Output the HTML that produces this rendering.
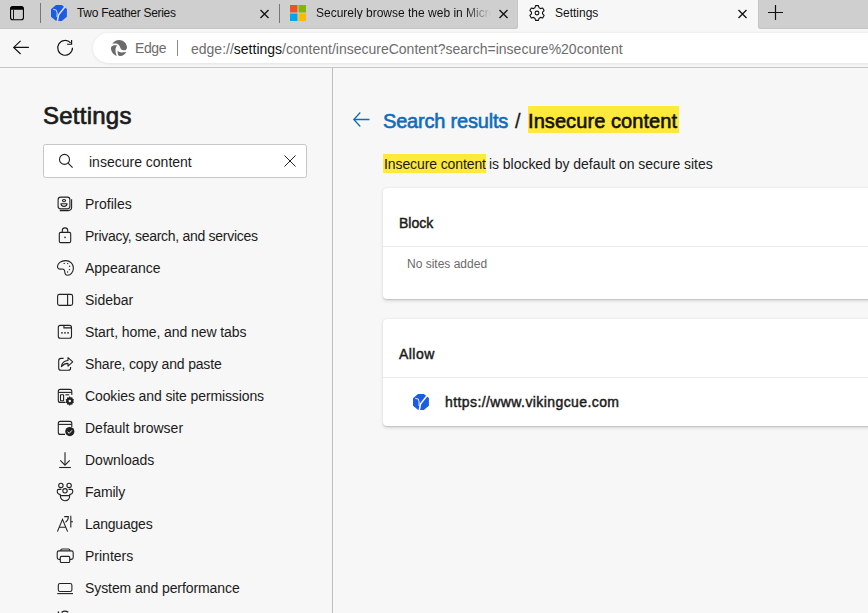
<!DOCTYPE html>
<html><head><meta charset="utf-8">
<style>
*{box-sizing:border-box;margin:0;padding:0}
html,body{width:868px;height:613px;overflow:hidden;background:#f7f7f7;font-family:"Liberation Sans",sans-serif;color:#1b1b1b}
.a{position:absolute;white-space:nowrap;line-height:1}
svg{position:absolute;overflow:visible}
#stripL{position:absolute;left:0;top:0;width:518px;height:29px;background:#cfcfcf;border-bottom-right-radius:3px;box-shadow:inset -1px -1px 0 #c5c5c5}
#stripR{position:absolute;left:758px;top:0;width:110px;height:29px;background:#cfcfcf;border-bottom-left-radius:3px;box-shadow:inset 1px -1px 0 #c5c5c5}
#toolbar{position:absolute;left:0;top:29px;width:868px;height:39px;background:#f7f7f7;border-bottom:1px solid #c6c6c6}
#pill{position:absolute;left:93px;top:33px;width:800px;height:30px;border-radius:15px;background:#fff;box-shadow:0 0.5px 3px rgba(0,0,0,.11)}
#side{position:absolute;left:332px;top:68px;width:1px;height:545px;background:#bdbdbd}
.card{position:absolute;left:383px;width:500px;background:#fff;border-radius:4px;box-shadow:0 1.6px 3.6px rgba(0,0,0,.13),0 0.3px 0.9px rgba(0,0,0,.11)}
.hl{background:#ffe93a}
</style></head><body>
<div id="stripL"></div><div id="stripR"></div>
<!-- tab actions icon -->
<svg style="left:10px;top:6px" width="14" height="14" viewBox="0 0 14 14"><rect x="0.55" y="0.55" width="12.9" height="13.2" rx="2.3" fill="none" stroke="#000" stroke-width="1.1"/><path d="M0.6 3.7 V2.8 A2.2 2.2 0 0 1 2.8 0.6 H11.2 A2.2 2.2 0 0 1 13.4 2.8 V3.7Z" fill="#000"/><line x1="3.5" y1="3.7" x2="3.5" y2="13.5" stroke="#000" stroke-width="0.9"/></svg>
<div class="a" style="left:40px;top:3px;width:1px;height:20px;background:#777"></div>

<!-- tab 1 -->
<svg style="left:51px;top:5px" width="16" height="16" viewBox="0 0 16 16"><path d="M5 0 H10.8 L15.9 4 V11.7 L10.8 16 H5.2 L0 11.7 V4.3Z" fill="#1b5ce6"/><path d="M2.2 4.3 L5.3 5.1 L6.1 7.8 L6 12" stroke="#e6e2da" stroke-width="0.9" fill="none"/><path d="M13.8 2 L7.6 9.8 L6.2 16.5" stroke="#e6e2da" stroke-width="1.5" fill="none"/></svg>
<div class="a" style="left:77px;top:7px;font-size:12px;color:#111;letter-spacing:-0.3px">Two Feather Series</div>
<svg style="left:260px;top:10px" width="9" height="8" viewBox="0 0 9 8"><path d="M0.5 0 L8.5 8 M8.5 0 L0.5 8" stroke="#111" stroke-width="1.3"/></svg>
<div class="a" style="left:279px;top:4px;width:1px;height:19px;background:#777"></div>

<!-- tab 2 -->
<svg style="left:290px;top:5px" width="16" height="16" viewBox="0 0 16 16"><rect x="0" y="0" width="7.5" height="7.5" fill="#f25022"/><rect x="8.5" y="0" width="7.5" height="7.5" fill="#7fba00"/><rect x="0" y="8.5" width="7.5" height="7.5" fill="#00a4ef"/><rect x="8.5" y="8.5" width="7.5" height="7.5" fill="#ffb900"/></svg>
<div class="a" style="left:316px;top:7px;width:175px;overflow:hidden;font-size:12px;color:#111;letter-spacing:0px;-webkit-mask-image:linear-gradient(90deg,#000 85%,transparent)">Securely browse the web in Microsoft Edge</div>
<svg style="left:499px;top:10px" width="9" height="8" viewBox="0 0 9 8"><path d="M0.5 0 L8.5 8 M8.5 0 L0.5 8" stroke="#111" stroke-width="1.3"/></svg>

<!-- tab 3 settings -->
<svg style="left:529px;top:4.8px" width="16" height="16" viewBox="0 0 16 16"><path d="M5.90 2.81 L6.57 0.64 L9.43 0.64 L10.10 2.81 L11.45 3.59 L13.66 3.08 L15.09 5.56 L13.55 7.22 L13.55 8.78 L15.09 10.44 L13.66 12.92 L11.45 12.41 L10.10 13.19 L9.43 15.36 L6.57 15.36 L5.90 13.19 L4.55 12.41 L2.34 12.92 L0.91 10.44 L2.45 8.78 L2.45 7.22 L0.91 5.56 L2.34 3.08 L4.55 3.59Z" fill="none" stroke="#111" stroke-width="1.1" stroke-linejoin="round"/><circle cx="8" cy="8" r="1.9" fill="none" stroke="#111" stroke-width="1.1"/></svg>
<div class="a" style="left:555px;top:7px;font-size:12px;color:#111">Settings</div>
<svg style="left:738px;top:10px" width="9" height="8" viewBox="0 0 9 8"><path d="M0.5 0 L8.5 8 M8.5 0 L0.5 8" stroke="#111" stroke-width="1.3"/></svg>
<svg style="left:768px;top:5px" width="15" height="15" viewBox="0 0 15 15"><path d="M7.5 0 V15 M0 7.5 H15" stroke="#111" stroke-width="1.2"/></svg>

<!-- toolbar -->
<div id="toolbar"></div>
<svg style="left:0;top:0" width="40" height="60" viewBox="0 0 40 60"><path d="M20.6 40.8 L13.7 47.4 L20.6 54 M13.7 47.4 H28.9" stroke="#111" stroke-width="1.15" fill="none"/></svg>
<svg style="left:52px;top:36px" width="26" height="24" viewBox="0 0 26 24"><path d="M20.5 11.85 A7.4 7.4 0 1 1 18.6 6.9" stroke="#111" stroke-width="1.15" fill="none"/><path d="M15.1 8.2 H19.6 V3.9" stroke="#111" stroke-width="1.15" fill="none"/></svg>
<div id="pill"></div>
<svg style="left:111px;top:40px" width="16" height="16" viewBox="0 0 16 16" fill="#6b6b6b"><path d="M1.2 3.8 C3 1.4 5.5 0 8 0 C12.4 0 16 3.4 16 7.6 C16 8.6 15.6 9.4 14.8 9.9 C13.6 10.4 11.4 10.4 10.2 9.2 C9.4 8.3 9 6.8 8.4 5.8 C7.6 4.2 6 3.6 4.4 3.6 C3.2 3.6 2 3.7 1.2 3.8Z"/><path d="M0.2 7 C1 5.8 2.6 5.2 4.2 5.2 C5 5.2 5.8 5.3 6.3 5.6 C5 6.6 4.5 8.2 4.5 10 C4.5 12.4 5 14.3 5.8 15.8 C2.6 14.8 0 11.8 0 8.2Z"/><path d="M6.6 10.4 C7.4 11.6 8.8 12.4 10.8 12.4 C12.6 12.4 14.2 12.1 15.3 11.8 C14.2 14.2 12 16 9.4 16 C8.2 16 7.4 15.4 7 14.4 C6.6 13.2 6.5 11.6 6.6 10.4Z"/></svg>
<div class="a" style="left:135px;top:41px;font-size:14px;color:#6d6d6d;letter-spacing:-0.4px">Edge</div>
<div class="a" style="left:177px;top:40px;width:1px;height:16px;background:#8a8a8a"></div>
<div class="a" style="left:191px;top:42px;font-size:14px;color:#6d6d6d">edge://<span style="color:#111">settings</span>/content/insecureContent?search=insecure%20content</div>

<!-- sidebar -->
<div id="side"></div>
<div class="a" style="left:43px;top:104px;font-size:24px;-webkit-text-stroke:0.7px #1b1b1b;letter-spacing:0.25px;color:#1b1b1b">Settings</div>
<div class="a" style="left:43px;top:144px;width:264px;height:34px;background:#fff;border:1px solid #c6c6c6;border-radius:2.5px"></div>
<svg style="left:59px;top:154px" width="15" height="15" viewBox="0 0 15 15"><circle cx="5.5" cy="5.4" r="5" stroke="#222" stroke-width="1.1" fill="none"/><path d="M9.1 9.1 L13.6 13.6" stroke="#222" stroke-width="1.2"/></svg>
<div class="a" style="left:89px;top:155px;font-size:14px;color:#1b1b1b">insecure content</div>
<svg style="left:284px;top:155px" width="12" height="12" viewBox="0 0 12 12"><path d="M0.5 0.5 L11.5 11.5 M11.5 0.5 L0.5 11.5" stroke="#222" stroke-width="1"/></svg>

<svg style="left:0;top:0" width="868" height="613" viewBox="0 0 868 613" fill="none" stroke="#222" stroke-width="1.1">
<!-- profiles -->
<rect x="58.1" y="197.1" width="11.8" height="11.8" rx="2.6"/>
<path d="M59.8 210.6 H68.5 A3 3 0 0 0 71.6 207.5 V199.2"/>
<ellipse cx="64" cy="200.6" rx="1.6" ry="1.1"/>
<path d="M61 203.8 H67 C67 205.6 65.6 206.4 64 206.4 C62.4 206.4 61 205.6 61 203.8Z"/>
<!-- lock -->
<rect x="59.3" y="232.4" width="11.4" height="10.2" rx="1.4"/>
<path d="M62.3 232.4 V230.6 A2.7 2.7 0 0 1 67.7 230.6 V232.4"/>
<circle cx="65" cy="237.4" r="0.8" fill="#222" stroke="none"/>
<!-- palette -->
<path d="M65.5 260.6 C70.5 260.6 73.4 264.2 73.4 268 C73.4 272.6 70.2 275.2 67.8 275.2 C65.6 275.2 64.8 273.6 64.8 271.8 C64.8 269.2 62.6 268.8 60.8 269.1 C58.8 269.4 57.5 268.3 57.5 266.4 C57.5 263.4 61 260.6 65.5 260.6Z"/>
<circle cx="64.2" cy="263.4" r="0.7" fill="#222" stroke="none"/>
<circle cx="67.6" cy="263.6" r="0.7" fill="#222" stroke="none"/>
<circle cx="69.6" cy="266.2" r="0.7" fill="#222" stroke="none"/>
<circle cx="69.4" cy="269.6" r="0.7" fill="#222" stroke="none"/>
<circle cx="67.6" cy="272" r="0.7" fill="#222" stroke="none"/>
<!-- sidebar -->
<rect x="57.6" y="294.4" width="15" height="11" rx="1.8"/>
<path d="M67.6 294.4 V305.4"/>
<!-- start home -->
<rect x="58.3" y="325.4" width="13.2" height="12.9" rx="2"/>
<path d="M63.9 325.4 V327.9 H71.5"/>
<rect x="61.2" y="332.1" width="1.5" height="1.5" fill="#222" stroke="none"/>
<rect x="64.25" y="332.1" width="1.5" height="1.5" fill="#222" stroke="none"/>
<rect x="67.3" y="332.1" width="1.5" height="1.5" fill="#222" stroke="none"/>
<!-- share -->
<path d="M63.6 358.4 H61 A2.3 2.3 0 0 0 58.7 360.7 V368 A2.3 2.3 0 0 0 61 370.3 H68.3 A2.3 2.3 0 0 0 70.6 368 V367"/>
<path d="M61.4 366.6 C62 362.6 64.6 360.6 68 360.5 V357.6 L72.7 361.8 L68 366.1 V363.4 C65.4 363.4 63.2 364.6 61.4 366.6Z" stroke-linejoin="round"/>
<!-- cookies -->
<path d="M65.5 402.4 H60.3 A2 2 0 0 1 58.3 400.4 V391.4 A2 2 0 0 1 60.3 389.4 H69.8 A2 2 0 0 1 71.8 391.4 V395"/>
<path d="M58.3 392.4 H71.8"/>
<rect x="60.5" y="394.7" width="3.1" height="6" rx="0.4"/>
<path d="M65.4 394.8 H69.2"/>
<path d="M69.8 396.1 L70.7 397.4 L72.3 397.2 L72.6 398.8 L74 399.6 L73.3 401 L74 402.4 L72.6 403.2 L72.3 404.8 L70.7 404.6 L69.8 405.9 L68.9 404.6 L67.3 404.8 L67 403.2 L65.6 402.4 L66.3 401 L65.6 399.6 L67 398.8 L67.3 397.2 L68.9 397.4Z" fill="#222" stroke="none"/>
<circle cx="69.8" cy="401" r="1.2" fill="#f7f7f7" stroke="none"/>
<!-- default browser -->
<path d="M65 434.4 H60.3 A2 2 0 0 1 58.3 432.4 V423.4 A2 2 0 0 1 60.3 421.4 H69.8 A2 2 0 0 1 71.8 423.4 V427"/>
<path d="M58.3 424.4 H71.8"/>
<circle cx="69.8" cy="431.6" r="4.6" fill="#222" stroke="none"/>
<path d="M67.6 431.8 L69.2 433.3 L72 430.3" stroke="#f7f7f7" stroke-width="1"/>
<!-- downloads -->
<path d="M65 452.2 V465"/>
<path d="M60.3 460.4 L65 465.1 L69.7 460.4"/>
<path d="M59.2 467.5 H70.9"/>
<!-- family -->
<circle cx="60.9" cy="485.4" r="2.2"/>
<circle cx="69.1" cy="485.4" r="2.2"/>
<circle cx="65" cy="490.8" r="2.2"/>
<path d="M61.4 489.4 H58.8 A1.6 1.6 0 0 0 57.2 491 C57.2 492.8 58.8 494.4 60.8 494.6"/>
<path d="M68.6 489.4 H71.2 A1.6 1.6 0 0 1 72.8 491 C72.8 492.8 71.2 494.4 69.2 494.6"/>
<path d="M60.3 495.6 H69.7 C69.7 499 67.6 500.8 65 500.8 C62.4 500.8 60.3 499 60.3 495.6Z"/>
<!-- languages -->
<path d="M57.4 531.6 L62.5 519.4 L67.6 531.6 M59.2 527.2 H65.8"/>
<path d="M64.2 516.6 H68.3 C68.3 519.2 67.4 521.2 65.4 522.2"/>
<path d="M70.8 515.8 V527.6 M70.8 521.8 H73"/>
<!-- printer -->
<path d="M60.8 550.8 V550.3 A1.3 1.3 0 0 1 62.1 549 H68.5 A1.3 1.3 0 0 1 69.8 550.3 V550.8"/>
<path d="M60.2 559.4 H59 A1.8 1.8 0 0 1 57.2 557.6 V552.7 A1.8 1.8 0 0 1 59 550.9 H71.4 A1.8 1.8 0 0 1 73.2 552.7 V557.6 A1.8 1.8 0 0 1 71.4 559.4 H69.8"/>
<rect x="60.3" y="556.4" width="9.4" height="6.1" rx="1"/>
<!-- laptop -->
<rect x="58.3" y="583.5" width="13.6" height="8" rx="1.8"/>
<path d="M57.2 593.6 H73"/>
<!-- reset (partial) -->
<path d="M58.4 611.5 V614 M61.6 612.3 C63.5 611 66.5 611 68.3 612.3" stroke-width="1.4"/>
</svg>
<div id="items" style="position:absolute;left:0;top:0">
<div class="a" style="left:85px;top:197px;font-size:14px">Profiles</div>
<div class="a" style="left:85px;top:229px;font-size:14px;letter-spacing:-0.29px">Privacy, search, and services</div>
<div class="a" style="left:85px;top:261px;font-size:14px">Appearance</div>
<div class="a" style="left:85px;top:293px;font-size:14px">Sidebar</div>
<div class="a" style="left:85px;top:325px;font-size:14px;letter-spacing:-0.08px">Start, home, and new tabs</div>
<div class="a" style="left:85px;top:357px;font-size:14px;letter-spacing:-0.17px">Share, copy and paste</div>
<div class="a" style="left:85px;top:389px;font-size:14px;letter-spacing:-0.11px">Cookies and site permissions</div>
<div class="a" style="left:85px;top:421px;font-size:14px">Default browser</div>
<div class="a" style="left:85px;top:453px;font-size:14px">Downloads</div>
<div class="a" style="left:85px;top:485px;font-size:14px;letter-spacing:-0.2px">Family</div>
<div class="a" style="left:85px;top:517px;font-size:14px;letter-spacing:-0.2px">Languages</div>
<div class="a" style="left:85px;top:549px;font-size:14px">Printers</div>
<div class="a" style="left:85px;top:581px;font-size:14px;letter-spacing:-0.08px">System and performance</div>
</div>

<!-- content -->
<svg style="left:353px;top:112px" width="17" height="15" viewBox="0 0 17 15"><path d="M7.3 0.5 L0.8 7.5 L7.3 14.5 M0.8 7.5 H16.5" stroke="#0f6cbd" stroke-width="1.3" fill="none"/></svg>
<div class="a" style="left:383px;top:111px;font-size:20px;-webkit-text-stroke:0.6px #0f6cbd;letter-spacing:-0.2px;color:#0f6cbd">Search results</div>
<div class="a" style="left:515px;top:111px;font-size:20px;-webkit-text-stroke:0.3px #1b1b1b;color:#1b1b1b">/</div>
<div class="a hl" style="left:528px;top:106px;width:151px;height:27px"></div>
<div class="a" style="left:528px;top:111px;font-size:20px;-webkit-text-stroke:0.6px #111;letter-spacing:0.08px;color:#111">Insecure content</div>

<div class="a hl" style="left:383px;top:154px;width:103px;height:19px"></div>
<div class="a" style="left:384px;top:157px;font-size:14px;color:#1b1b1b;letter-spacing:-0.1px">Insecure content <span style="letter-spacing:-0.03px;margin-left:-0.8px">is blocked by default on secure sites</span></div>

<div class="card" style="top:188px;height:111px">
  <div style="position:absolute;left:0;top:58px;width:100%;height:1px;background:#e9e9e9"></div>
</div>
<div class="a" style="left:399px;top:216px;font-size:14px;-webkit-text-stroke:0.45px #1b1b1b;letter-spacing:0px">Block</div>
<div class="a" style="left:407px;top:258px;font-size:12px;color:#6a6a6a">No sites added</div>

<div class="card" style="top:319px;height:107px">
  <div style="position:absolute;left:0;top:58px;width:100%;height:1px;background:#e9e9e9"></div>
</div>
<div class="a" style="left:399px;top:347px;font-size:14px;-webkit-text-stroke:0.45px #1b1b1b;letter-spacing:0.45px">Allow</div>
<svg style="left:413px;top:394px" width="16" height="16" viewBox="0 0 16 16"><path d="M5 0 H10.8 L15.9 4 V11.7 L10.8 16 H5.2 L0 11.7 V4.3Z" fill="#1b5ce6"/><path d="M2.2 4.3 L5.3 5.1 L6.1 7.8 L6 12" stroke="#fff" stroke-width="0.9" fill="none"/><path d="M13.8 2 L7.6 9.8 L6.2 16.5" stroke="#fff" stroke-width="1.5" fill="none"/></svg>
<div class="a" style="left:445px;top:395px;font-size:14px;-webkit-text-stroke:0.45px #1b1b1b;letter-spacing:0.41px">https://www.vikingcue.com</div>
</body></html>
